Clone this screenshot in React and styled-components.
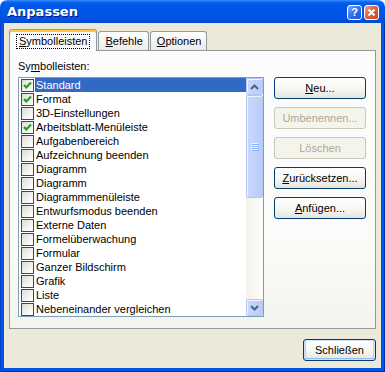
import React from 'react';
import styled, { createGlobalStyle } from 'styled-components';

const GlobalStyle = createGlobalStyle`
  html, body { margin: 0; padding: 0; background: #fff; }
  body { font-family: "Liberation Sans", Arial, sans-serif; font-size: 11px; }
  * { box-sizing: border-box; }
`;

const toolbars = [
  { name: 'Standard', checked: true, selected: true },
  { name: 'Format', checked: true },
  { name: '3D-Einstellungen' },
  { name: 'Arbeitsblatt-Menüleiste', checked: true },
  { name: 'Aufgabenbereich' },
  { name: 'Aufzeichnung beenden' },
  { name: 'Diagramm' },
  { name: 'Diagramm' },
  { name: 'Diagrammmenüleiste' },
  { name: 'Entwurfsmodus beenden' },
  { name: 'Externe Daten' },
  { name: 'Formelüberwachung' },
  { name: 'Formular' },
  { name: 'Ganzer Bildschirm' },
  { name: 'Grafik' },
  { name: 'Liste' },
  { name: 'Nebeneinander vergleichen' },
];

const Window = styled.div`
  width: 385px;
  height: 372px;
  display: flex;
  flex-direction: column;
`;

const TitleBar = styled.div`
  height: 23px;
  flex: none;
  display: flex;
  align-items: center;
  justify-content: space-between;
  padding: 0 6px 0 7px;
  border-radius: 7px 7px 0 0;
  background: linear-gradient(to bottom, #3d95ff 0%, #0a64f0 9%, #0058e8 22%, #0055e5 55%, #0053e2 85%, #0046cc 100%);

  h1 {
    margin: 0;
    font-family: "DejaVu Sans", "Liberation Sans", sans-serif;
    font-size: 13px;
    font-weight: bold;
    color: #fff;
    text-shadow: 1px 1px #0a1883;
  }
`;

const CaptionButtons = styled.div`
  display: flex;
  gap: 2px;
  margin-top: 1px;
`;

const CaptionButton = styled.div`
  width: 15px;
  height: 15px;
  border: 1px solid #fff;
  border-radius: 3px;
  display: flex;
  align-items: center;
  justify-content: center;
  color: #fff;
  font-weight: bold;
  font-size: 11px;
  background: ${(p) =>
    p.$close
      ? 'linear-gradient(135deg, #f0a890 0%, #e06a48 40%, #c84220 100%)'
      : 'linear-gradient(135deg, #8ab4ff 0%, #3a78f0 40%, #1a50d0 100%)'};
`;

const Frame = styled.div`
  flex: 1;
  display: flex;
  padding: 0 4px 4px;
  background: #0055e5;
  box-shadow: inset 1px 0 #0a3fd0, inset -1px 0 #002fa8, inset 0 -1px #002fa8;
`;

const Client = styled.div`
  flex: 1;
  display: flex;
  flex-direction: column;
  padding: 6px 5px 0 5px;
  background: #ece9d8;
`;

const TabRow = styled.div`
  height: 21px;
  display: flex;
  align-items: flex-end;
`;

const Tab = styled.div`
  position: relative;
  display: flex;
  align-items: center;
  justify-content: center;
  border: 1px solid #919b9c;
  border-bottom: 0;
  border-radius: 3px 3px 0 0;
  color: #000;
  ${(p) =>
    p.$active
      ? `
    z-index: 1;
    height: 22px;
    margin-bottom: -1px;
    padding: 1px 6px 0;
    border-top: 1px solid #e68b2c;
    box-shadow: inset 0 2px #ffc83c;
    background: #fcfcfe;
  `
      : `
    height: 19px;
    margin-left: 1px;
    padding: 0 5px 0 6px;
    background: linear-gradient(to bottom, #ffffff, #ecebe6);
  `}
`;

const Focus = styled.span`
  border: 1px dotted #000;
  padding: 0 2px;
  line-height: 13px;
`;

const Panel = styled.div`
  height: 279px;
  flex: none;
  display: grid;
  grid-template-columns: 246px 92px;
  grid-template-rows: auto 1fr;
  column-gap: 10px;
  align-content: start;
  padding: 9px 8px 0 8px;
  border: 1px solid #919b9c;
  background: linear-gradient(to bottom, #fcfcfe 0%, #fbfbf9 70%, #f4f3ee 100%);
`;

const FieldLabel = styled.div`
  grid-column: 1 / 3;
  line-height: 13px;
  margin-bottom: 4px;
`;

const ListBox = styled.div`
  width: 246px;
  height: 240px;
  display: flex;
  border: 1px solid #7f9db9;
  background: #fff;
`;

const Rows = styled.div`
  flex: 1;
  display: flex;
  flex-direction: column;
`;

const Row = styled.div`
  height: 14px;
  display: flex;
  align-items: center;
`;

const CheckBox = styled.div`
  width: 13px;
  height: 13px;
  flex: none;
  margin: 0 1px 0 2px;
  border: 1px solid #1c5180;
  display: flex;
  align-items: center;
  justify-content: center;
  background: linear-gradient(135deg, #dcdcd7 0%, #f3f3ef 60%, #ffffff 100%);
`;

const RowLabel = styled.div`
  flex: 1;
  height: 14px;
  line-height: 14px;
  padding-left: 1px;
  white-space: nowrap;
  color: ${(p) => (p.$selected ? '#fff' : '#000')};
  background: ${(p) => (p.$selected ? '#316ac5' : 'transparent')};
`;

const ScrollBar = styled.div`
  width: 17px;
  flex: none;
  display: flex;
  flex-direction: column;
  background: linear-gradient(to right, #f3f1ec, #fefefb);
`;

const ScrollPart = styled.div`
  height: ${(p) => p.$h}px;
  flex: none;
  display: flex;
  align-items: center;
  justify-content: center;
  border: 1px solid #b4c7f2;
  border-radius: 2px;
  box-shadow: inset 1px 1px #eef3fe;
  background: linear-gradient(to right, #c9d8fc, #b9cdf7);
`;

const Track = styled.div`
  flex: 1;
`;

const ButtonColumn = styled.div`
  display: flex;
  flex-direction: column;
  gap: 8px;
`;

const Button = styled.div`
  width: ${(p) => p.$w || 92}px;
  height: 22px;
  display: flex;
  align-items: center;
  justify-content: center;
  border: 1px solid ${(p) => (p.$disabled ? '#c9c7ba' : '#003c74')};
  border-radius: 3px;
  color: ${(p) => (p.$disabled ? '#aca899' : '#000')};
  background: ${(p) =>
    p.$disabled ? '#f5f4ea' : 'linear-gradient(to bottom, #ffffff 0%, #f5f5f1 60%, #e6e3da 100%)'};
  box-shadow: ${(p) =>
    p.$default ? 'inset 0 0 0 1px #cee0fa, inset 0 -2px #98b8ea, inset 2px 0 #bcd2f4, inset -2px 0 #bcd2f4' : 'none'};
`;

const Footer = styled.div`
  flex: 1;
  display: flex;
  justify-content: flex-end;
  align-items: flex-start;
  padding-top: 10px;
`;

const Check = () => (
  <svg width="9" height="9" viewBox="0 0 9 9">
    <polyline points="1,4 3.3,6.5 8,1.5" fill="none" stroke="#21a121" strokeWidth="2.2" />
  </svg>
);

const Chevron = ({ down }) => (
  <svg width="9" height="6" viewBox="0 0 9 6">
    <polyline
      points={down ? '1,1 4.5,4.5 8,1' : '1,5 4.5,1.5 8,5'}
      fill="none"
      stroke="#4d6185"
      strokeWidth="2"
    />
  </svg>
);

const Grip = () => (
  <svg width="8" height="8" viewBox="0 0 8 8">
    {[0, 2, 4, 6].map((y) => (
      <g key={y}>
        <rect x="0" y={y} width="7" height="1" fill="#eef4fe" />
        <rect x="1" y={y + 1} width="7" height="1" fill="#8cb0f8" />
      </g>
    ))}
  </svg>
);

const CloseGlyph = () => (
  <svg width="9" height="9" viewBox="0 0 9 9">
    <path d="M1.5 1.5 L7.5 7.5 M7.5 1.5 L1.5 7.5" stroke="#fff" strokeWidth="2" />
  </svg>
);

export default function App() {
  return (
    <Window>
      <GlobalStyle />
      <TitleBar>
        <h1>Anpassen</h1>
        <CaptionButtons>
          <CaptionButton>?</CaptionButton>
          <CaptionButton $close>
            <CloseGlyph />
          </CaptionButton>
        </CaptionButtons>
      </TitleBar>
      <Frame>
        <Client>
          <TabRow>
            <Tab $active>
              <Focus>
                <u>S</u>ymbolleisten
              </Focus>
            </Tab>
            <Tab>
              <span>
                <u>B</u>efehle
              </span>
            </Tab>
            <Tab>
              <span>
                <u>O</u>ptionen
              </span>
            </Tab>
          </TabRow>
          <Panel>
            <FieldLabel>
              Sy<u>m</u>bolleisten:
            </FieldLabel>
            <ListBox>
              <Rows>
                {toolbars.map((t, i) => (
                  <Row key={i}>
                    <CheckBox>{t.checked && <Check />}</CheckBox>
                    <RowLabel $selected={t.selected}>{t.name}</RowLabel>
                  </Row>
                ))}
              </Rows>
              <ScrollBar>
                <ScrollPart $h={17}>
                  <Chevron />
                </ScrollPart>
                <ScrollPart $h={103}>
                  <Grip />
                </ScrollPart>
                <Track />
                <ScrollPart $h={17}>
                  <Chevron down />
                </ScrollPart>
              </ScrollBar>
            </ListBox>
            <ButtonColumn>
              <Button>
                <span>
                  <u>N</u>eu...
                </span>
              </Button>
              <Button $disabled>Umbenennen...</Button>
              <Button $disabled>Löschen</Button>
              <Button>
                <span>
                  <u>Z</u>urücksetzen...
                </span>
              </Button>
              <Button>
                <span>
                  <u>A</u>nfügen...
                </span>
              </Button>
            </ButtonColumn>
          </Panel>
          <Footer>
            <Button $w={73} $default>
              Schließen
            </Button>
          </Footer>
        </Client>
      </Frame>
    </Window>
  );
}
